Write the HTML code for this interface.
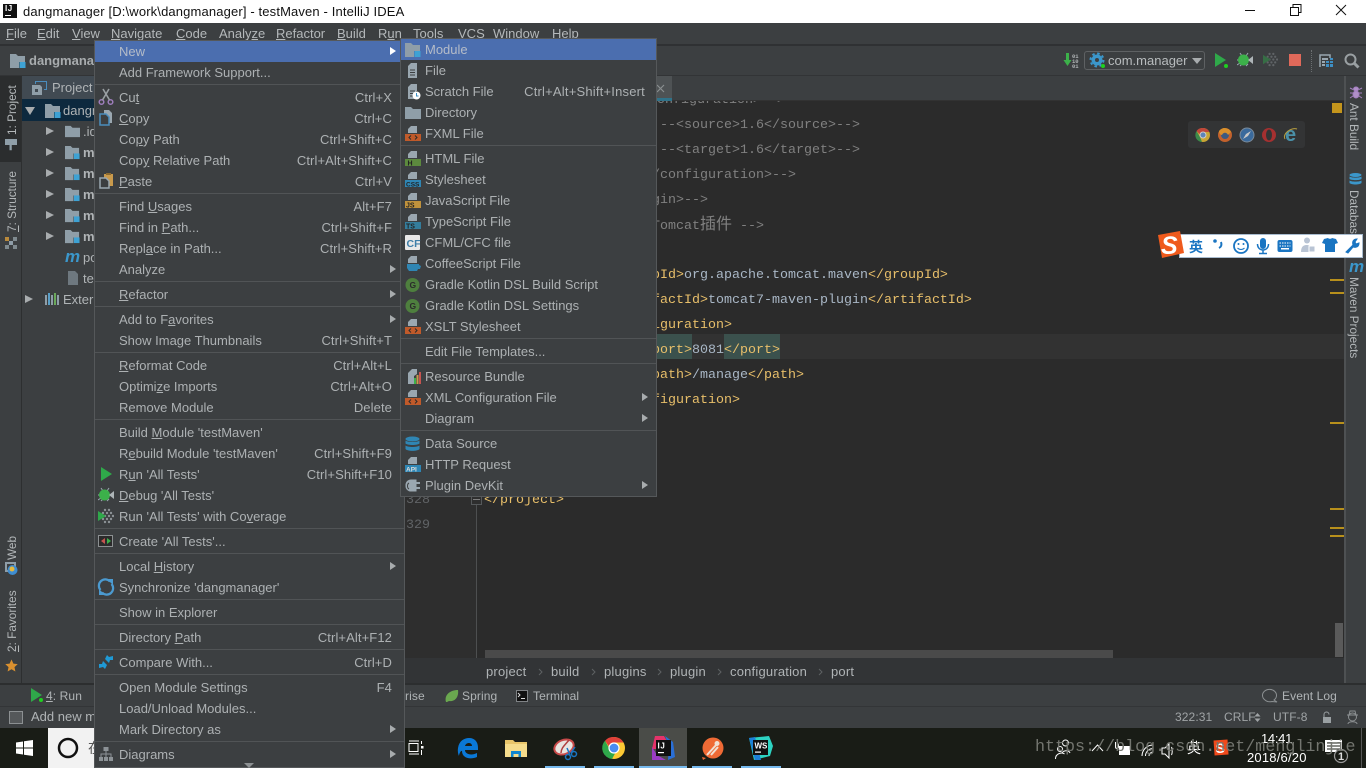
<!DOCTYPE html>
<html><head><meta charset="utf-8"><title>dangmanager</title>
<style>
html,body{margin:0;padding:0;width:1366px;height:768px;overflow:hidden;background:#3c3f41}
body{position:relative;font-family:"Liberation Sans","Noto Sans CJK SC",sans-serif;font-size:13px;color:#b0b4b6;letter-spacing:0}
.p{position:absolute;white-space:nowrap}
.box{position:absolute}
svg{position:absolute;overflow:visible}
.m{position:absolute;background:#3c3f41;border:1px solid #55585a;box-sizing:border-box;z-index:20}
.r{position:relative;height:21px;line-height:21px;white-space:nowrap;color:#adb1b3}
.r.h{background:#4b6eaf;color:#b5bcc8}
.s{height:4px;position:relative}
.s:before{content:"";position:absolute;left:0;right:0;top:1px;height:1px;background:#515456}
#a .r{padding-left:24px}
#b .r{padding-left:24px}
.k{position:absolute;right:12px;top:0;font-weight:normal;letter-spacing:.1px}
#b .k{right:11px;letter-spacing:.2px}
.a{position:absolute;right:8px;top:6px;width:0;height:0;border-left:6px solid #a8acae;border-top:4.5px solid transparent;border-bottom:4.5px solid transparent}
.h .a{border-left-color:#fff}
.ic{left:3px;top:2px;width:16px;height:16px}
#b .ic{left:4px;top:3px}
.mb{position:absolute;top:23px;line-height:22px;color:#b4b8ba;white-space:nowrap}
.c{position:absolute;margin:0;height:25px;line-height:25px;font-family:"Liberation Mono","Noto Sans CJK SC",monospace;font-size:13.33px;letter-spacing:0;color:#e8bf6a;white-space:pre}
.c i{font-style:normal;color:#a9b7c6}
.c em{font-style:normal;color:#808080}
.v{position:absolute;writing-mode:vertical-rl;white-space:nowrap;color:#b4b8ba;font-size:11.8px;letter-spacing:0;line-height:16px}
.up{transform:rotate(180deg)}
.st{position:absolute;left:1330px;width:14px;height:2px;background:#b8901c}
.tb{position:absolute;top:766px;height:2px;background:#76b9ed}
.bc{letter-spacing:.2px}
.t12{font-size:12px;letter-spacing:.1px}
</style></head>
<body>
<svg width="0" height="0" style="position:absolute">
<defs>
<symbol id="fo" viewBox="0 0 16 16"><path fill="#8f9ea8" d="M0 2h6l2 2h8v10H0z"/></symbol>
<symbol id="mo" viewBox="0 0 16 16"><path fill="#8f9ea8" d="M0 1h6l2 2h7v6H9v6H0z"/><rect x="9.5" y="9" width="6" height="6" fill="#3ea2d4"/></symbol>
<symbol id="he" viewBox="0 0 16 16"><path fill="#9aa7b0" d="M6 0h6v7H3V3z"/></symbol>
<symbol id="bug" viewBox="0 0 16 16"><path stroke="#9aa7b0" stroke-width="1" fill="none" d="M3 1l2 3M11 1L9 4M0 8h3M0 13l3-2M3 14l2-2M9 14l2-2"/><circle cx="6.5" cy="8" r="5.5" fill="#3cb14a"/><path fill="#aeb5b8" d="M16 4v8l-5-4z"/></symbol>
<symbol id="cov" viewBox="0 0 16 16"><g fill="#8c9296"><circle cx="7" cy="2" r="1.2"/><circle cx="11" cy="2" r="1.2"/><circle cx="5" cy="5" r="1.2"/><circle cx="9" cy="5" r="1.2"/><circle cx="13" cy="5" r="1.2"/><circle cx="7" cy="8" r="1.2"/><circle cx="11" cy="8" r="1.2"/><circle cx="15" cy="8" r="1.2"/><circle cx="5" cy="11" r="1.2"/><circle cx="9" cy="11" r="1.2"/><circle cx="13" cy="11" r="1.2"/><circle cx="7" cy="14" r="1.2"/><circle cx="11" cy="14" r="1.2"/></g><path fill="#2fa84a" d="M0 3l8 5-8 5z"/></symbol>
</defs>
</svg>

<!-- title bar -->
<div class="box" style="left:0;top:0;width:1366px;height:23px;background:#fff"></div>
<div class="box" style="left:3px;top:4px;width:14px;height:14px;background:#111"></div>
<div class="p" style="left:5px;top:4px;color:#fff;font-size:8px;font-weight:bold;line-height:10px;letter-spacing:.5px">IJ</div>
<div class="box" style="left:5px;top:15px;width:6px;height:1px;background:#fff"></div>
<div class="p" style="left:23px;top:3px;line-height:18px;color:#111;letter-spacing:.14px">dangmanager [D:\work\dangmanager] - testMaven - IntelliJ IDEA</div>
<svg style="left:1240px;top:0" width="126" height="23" stroke="#111" fill="none"><path d="M5 10.5h10"/><path d="M50.5 7.5h8v8h-8zM53 7V4.500h8v8h-2.500"/><path d="M96 5l10 10M106 5L96 15"/></svg>

<!-- menu bar -->
<div class="box" style="left:0;top:23px;width:1366px;height:22px;background:#3c3f41"></div>
<div class="mb" style="left:6px"><u>F</u>ile</div>
<div class="mb" style="left:37px"><u>E</u>dit</div>
<div class="mb" style="left:72px"><u>V</u>iew</div>
<div class="mb" style="left:111px"><u>N</u>avigate</div>
<div class="mb" style="left:176px"><u>C</u>ode</div>
<div class="mb" style="left:219px">Analy<u>z</u>e</div>
<div class="mb" style="left:276px"><u>R</u>efactor</div>
<div class="mb" style="left:337px"><u>B</u>uild</div>
<div class="mb" style="left:378px">R<u>u</u>n</div>
<div class="mb" style="left:413px"><u>T</u>ools</div>
<div class="mb" style="left:458px">VC<u>S</u></div>
<div class="mb" style="left:493px"><u>W</u>indow</div>
<div class="mb" style="left:552px"><u>H</u>elp</div>

<!-- nav bar -->
<div class="box" style="left:0;top:44px;width:1366px;height:2px;background:#2f3133"></div>
<div class="box" style="left:0;top:75px;width:1366px;height:1px;background:#323436"></div>
<svg style="left:10px;top:53px" width="16" height="16"><use href="#mo"/></svg>
<div class="p" style="left:29px;top:52px;line-height:17px;font-weight:bold;color:#a8acae">dangmanager</div>

<svg style="left:1063px;top:52px" width="16" height="16"><path fill="#3cb14a" d="M3 1h3v7h2.500L4.500 14 .5 8H3z"/><text x="9" y="6" font-size="5.500" font-family="Liberation Mono" fill="#b0b4b6" letter-spacing="0" font-weight="bold">01</text><text x="9" y="11" font-size="5.500" font-family="Liberation Mono" fill="#b0b4b6" letter-spacing="0" font-weight="bold">10</text><text x="9" y="16" font-size="5.500" font-family="Liberation Mono" fill="#b0b4b6" letter-spacing="0" font-weight="bold">01</text></svg>
<div class="box" style="left:1084px;top:51px;width:121px;height:19px;border:1px solid #5e6163;border-radius:3px;box-sizing:border-box"></div>
<svg style="left:1090px;top:53px" width="16" height="16" viewBox="0 0 16 16"><circle cx="7" cy="7" r="5.500" fill="#3b97cb"/><circle cx="7" cy="7" r="6.500" fill="none" stroke="#3b97cb" stroke-width="2" stroke-dasharray="2.500 2.600"/><circle cx="7" cy="7" r="2" fill="#3c3f41"/><circle cx="13" cy="13" r="2" fill="#1fd01f"/></svg>
<div class="p" style="left:1108px;top:52px;line-height:17px;color:#b8bcbe">com.manager</div>
<div class="box" style="left:1192px;top:58px;border-top:6px solid #a8acae;border-left:5px solid transparent;border-right:5px solid transparent"></div>
<svg style="left:1215px;top:53px" width="16" height="16"><path fill="#2fa84a" d="M0 0l11 7-11 7z"/><circle cx="11" cy="13" r="2" fill="#1fd01f"/></svg>
<svg style="left:1237px;top:52px" width="16" height="16"><use href="#bug"/></svg>
<svg style="left:1263px;top:52px;opacity:.45" width="15" height="15"><use href="#cov"/></svg>
<div class="box" style="left:1289px;top:54px;width:12px;height:12px;background:#e0695a"></div>
<div class="box" style="left:1311px;top:50px;height:22px;width:0;border-left:1px dotted #6c7072"></div>
<svg style="left:1319px;top:53px" width="16" height="16"><path fill="none" stroke="#9aa7b0" stroke-width="1.500" d="M1 14V2h10v3"/><g fill="#9aa7b0"><rect x="3" y="5" width="6" height="2"/><rect x="3" y="8" width="3" height="2"/><rect x="3" y="11" width="3" height="2"/></g><g fill="#3e8fc4"><rect x="7" y="8" width="3" height="2"/><rect x="11" y="8" width="3" height="2"/><rect x="7" y="11" width="3" height="3"/><rect x="11" y="11" width="3" height="3"/><rect x="11" y="5" width="3" height="2"/></g></svg>
<svg style="left:1344px;top:53px" width="16" height="16" fill="none" stroke="#9aa0a3" stroke-width="2"><circle cx="6.500" cy="6.500" r="5"/><path stroke-width="3" d="M10 10l4.500 4.500"/></svg>

<!-- left stripe -->
<div class="box" style="left:0;top:76px;width:21px;height:607px;background:#3c3f41"></div>
<div class="box" style="left:0;top:76px;width:21px;height:86px;background:#2b2d2e"></div>
<div class="box" style="left:21px;top:76px;width:1px;height:607px;background:#2d2f30"></div>
<div class="v up" style="left:4px;top:85px;height:50px">1: Project</div>
<svg style="left:5px;top:139px" width="12" height="12" viewBox="0 0 16 16"><path fill="#8f9ea8" d="M0 0h16v8H9v7H6V8H0z"/></svg>
<div class="v up" style="left:4px;top:171px;height:61px"><u>7</u>: Structure</div>
<svg style="left:5px;top:237px" width="12" height="12"><rect x="0" y="0" width="4" height="4" fill="#b98a3c"/><rect x="8" y="0" width="4" height="4" fill="#7f8a8f"/><rect x="0" y="8" width="4" height="4" fill="#7f8a8f"/><rect x="8" y="8" width="4" height="4" fill="#7f8a8f"/><rect x="4" y="4" width="4" height="4" fill="#8f9ea8"/></svg>
<div class="v up" style="left:4px;top:534px;height:26px">Web</div>
<svg style="left:5px;top:562px" width="14" height="14"><rect x="0" y="0" width="11" height="10" fill="#8f9ea8"/><rect x="2" y="2" width="7" height="6" fill="#3c3f41"/><circle cx="7.500" cy="8" r="5" fill="#3f8dd0"/><circle cx="7" cy="7" r="2.500" fill="#e5b83c"/></svg>
<div class="v up" style="left:4px;top:596px;height:56px"><u>2</u>: Favorites</div>
<svg style="left:5px;top:659px" width="13" height="13" viewBox="0 0 24 24"><path fill="#d9902f" d="M12 1l3.500 7.500 8 1-6 5.500 1.700 8L12 19l-7.200 4 1.700-8-6-5.500 8-1z"/></svg>

<!-- project panel -->
<div class="box" style="left:22px;top:76px;width:73px;height:607px;background:#3c3f41"></div>
<div class="box" style="left:22px;top:76px;width:73px;height:23px;background:#414a52"></div>
<svg style="left:32px;top:81px" width="16" height="14" fill="none" stroke="#8f9ea8"><path stroke="#4b8dbd" d="M3.500 3V.5h11v8H12"/><path fill="#8f9ea8" stroke="none" d="M0 4h8l2 2v8H0z"/><rect x="3" y="8" width="3" height="3" fill="#414a52" stroke="none"/></svg>
<div class="p" style="left:52px;top:79px;line-height:17px">Project</div>
<div class="box" style="left:22px;top:99px;width:73px;height:22px;background:#0d293e"></div>
<div class="box" style="left:25px;top:107px;border-top:8px solid #a8acae;border-left:5px solid transparent;border-right:5px solid transparent"></div>
<svg style="left:45px;top:103px" width="16" height="16"><use href="#mo"/></svg>
<div class="p" style="left:63px;top:102px;line-height:17px">dangmanager</div>
<div class="box" style="left:46px;top:127px;border-left:8px solid #a8acae;border-top:4.500px solid transparent;border-bottom:4.500px solid transparent"></div>
<svg style="left:65px;top:124px" width="15" height="15"><use href="#fo"/></svg>
<div class="p" style="left:83px;top:123px;line-height:17px">.idea</div>
<div class="box" style="left:46px;top:148px;border-left:8px solid #a8acae;border-top:4.500px solid transparent;border-bottom:4.500px solid transparent"></div>
<svg style="left:65px;top:145px" width="15" height="15"><use href="#mo"/></svg>
<div class="p" style="left:83px;top:144px;line-height:17px;font-weight:bold">manager</div>
<div class="box" style="left:46px;top:169px;border-left:8px solid #a8acae;border-top:4.500px solid transparent;border-bottom:4.500px solid transparent"></div>
<svg style="left:65px;top:166px" width="15" height="15"><use href="#mo"/></svg>
<div class="p" style="left:83px;top:165px;line-height:17px;font-weight:bold">manager</div>
<div class="box" style="left:46px;top:190px;border-left:8px solid #a8acae;border-top:4.500px solid transparent;border-bottom:4.500px solid transparent"></div>
<svg style="left:65px;top:187px" width="15" height="15"><use href="#mo"/></svg>
<div class="p" style="left:83px;top:186px;line-height:17px;font-weight:bold">manager</div>
<div class="box" style="left:46px;top:211px;border-left:8px solid #a8acae;border-top:4.500px solid transparent;border-bottom:4.500px solid transparent"></div>
<svg style="left:65px;top:208px" width="15" height="15"><use href="#mo"/></svg>
<div class="p" style="left:83px;top:207px;line-height:17px;font-weight:bold">manager</div>
<div class="box" style="left:46px;top:232px;border-left:8px solid #a8acae;border-top:4.500px solid transparent;border-bottom:4.500px solid transparent"></div>
<svg style="left:65px;top:229px" width="15" height="15"><use href="#mo"/></svg>
<div class="p" style="left:83px;top:228px;line-height:17px;font-weight:bold">manager</div>
<div class="p" style="left:65px;top:248px;line-height:18px;font-size:17px;font-style:italic;font-weight:bold;color:#3b97cb;letter-spacing:0">m</div>
<div class="p" style="left:83px;top:249px;line-height:17px">pom.xml</div>
<svg style="left:65px;top:271px" width="15" height="15"><path fill="#8f9ea8" d="M3 0h7l3 3v11H3z" opacity=".6"/></svg>
<div class="p" style="left:83px;top:270px;line-height:17px">testMaven</div>
<div class="box" style="left:25px;top:295px;border-left:8px solid #a8acae;border-top:4.500px solid transparent;border-bottom:4.500px solid transparent"></div>
<svg style="left:45px;top:293px" width="15" height="13" fill="#8f9ea8"><rect x="0" y="2" width="2" height="10"/><rect x="3" y="0" width="2" height="12" fill="#5aa0c8"/><rect x="6" y="2" width="2" height="10"/><rect x="9" y="0" width="2" height="12" fill="#6aa85a"/><rect x="12" y="2" width="2" height="10"/></svg>
<div class="p" style="left:63px;top:291px;line-height:17px">External Libraries</div>

<!-- editor -->
<div class="box" style="left:95px;top:76px;width:1249px;height:608px;background:#2b2b2b"></div>
<div class="box" style="left:405px;top:100px;width:72px;height:558px;background:#2e2e2e"></div>
<div class="box" style="left:476px;top:100px;width:1px;height:558px;background:#4d4f50"></div>
<div class="box" style="left:477px;top:334px;width:867px;height:25px;background:#323232"></div>

<pre class="c" style="left:657px;top:87.500px"><em>onfiguration&gt;--&gt;</em></pre>
<pre class="c" style="left:660px;top:112.500px"><em>--&lt;source&gt;1.6&lt;/source&gt;--&gt;</em></pre>
<pre class="c" style="left:660px;top:137.500px"><em>--&lt;target&gt;1.6&lt;/target&gt;--&gt;</em></pre>
<pre class="c" style="left:652px;top:162.500px"><em>/configuration&gt;--&gt;</em></pre>
<pre class="c" style="left:652px;top:187.500px"><em>gin&gt;--&gt;</em></pre>
<pre class="c" style="left:652px;top:212.500px"><em>Tomcat<span style="font-size:16px">插件</span> --&gt;</em></pre>
<pre class="c" style="left:612px;top:262.500px">&lt;groupId&gt;<i>org.apache.tomcat.maven</i>&lt;/groupId&gt;</pre>
<pre class="c" style="left:612px;top:287.500px">&lt;artifactId&gt;<i>tomcat7-maven-plugin</i>&lt;/artifactId&gt;</pre>
<pre class="c" style="left:612px;top:312.500px">&lt;configuration&gt;</pre>
<div class="box" style="left:644px;top:334px;width:48px;height:25px;background:#3b514d"></div>
<div class="box" style="left:724px;top:334px;width:56px;height:25px;background:#3b514d"></div>
<pre class="c" style="left:644px;top:337.500px">&lt;port&gt;<i>8081</i>&lt;/port&gt;</pre>
<pre class="c" style="left:644px;top:362.500px">&lt;path&gt;<i>/manage</i>&lt;/path&gt;</pre>
<pre class="c" style="left:612px;top:387.500px">&lt;/configuration&gt;</pre>
<pre class="c" style="left:484px;top:487.500px">&lt;/project&gt;</pre>
<pre class="c" style="left:406px;top:487.500px;color:#606366">328</pre>
<pre class="c" style="left:406px;top:512.500px;color:#606366">329</pre>
<div class="box" style="left:471px;top:495px;width:11px;height:10px;background:#2e2e2e;border:1px solid #55585a;box-sizing:border-box"></div>
<div class="box" style="left:473px;top:499px;width:7px;height:1px;background:#808080"></div>

<div class="box" style="left:1332px;top:103px;width:10px;height:10px;background:#c4951c"></div>
<div class="st" style="top:279px"></div><div class="st" style="top:292px"></div><div class="st" style="top:422px"></div><div class="st" style="top:508px"></div><div class="st" style="top:527px"></div><div class="st" style="top:535px"></div>
<div class="box" style="left:1335px;top:623px;width:8px;height:34px;background:#5a5a5a"></div>
<div class="box" style="left:485px;top:650px;width:628px;height:8px;background:#4a4a4a"></div>

<!-- browser icons -->
<div class="box" style="left:1188px;top:121px;width:117px;height:27px;background:#333435;border-radius:3px"></div>
<svg style="left:1188px;top:121px" width="117" height="27">
<circle cx="15" cy="14" r="7" fill="#c9a534"/><path d="M15 7a7 7 0 0 1 6.300 4H15l-3.500 2-3-3A7 7 0 0 1 15 7z" fill="#c0473a"/><path d="M8.500 10l3.500 6 2 5a7 7 0 0 1-6-10z" fill="#3c8a4a"/><circle cx="15" cy="14" r="3" fill="#5c84b8" stroke="#ccc"/>
<circle cx="37" cy="14" r="7" fill="#c2612c"/><circle cx="37" cy="14" r="4" fill="#3c5a80"/><path d="M31 10a7 7 0 0 1 12 1l-3 3c-1-3-5-3-6 0-2 0-3-2-3-4z" fill="#d8902c"/>
<circle cx="59" cy="14" r="7" fill="#3a6a9c" stroke="#7a8a9a"/><path d="M63 10l-3 5-2-2zM55 18l3-5 2 2z" fill="#c8c8c8"/>
<circle cx="81" cy="14" r="7" fill="#a53030"/><ellipse cx="81" cy="14" rx="3" ry="5.500" fill="#333435"/>
<text x="97" y="20" font-size="20" font-weight="bold" font-family="Liberation Sans" fill="#4a90a8" letter-spacing="0">e</text><path d="M97 18c-3-5 6-12 12-10" stroke="#b8a040" fill="none"/>
</svg>

<!-- editor tabs -->
<div class="box" style="left:657px;top:76px;width:687px;height:24px;background:#3c3f41"></div>
<div class="box" style="left:657px;top:100px;width:687px;height:1px;background:#323232"></div>
<div class="box" style="left:640px;top:76px;width:32px;height:22px;background:#4e5254"></div>
<div class="box" style="left:640px;top:98px;width:32px;height:3px;background:#30738a"></div>
<svg style="left:656px;top:84px" width="10" height="10" stroke="#8a8e90" fill="none" stroke-width="1.200"><path d="M1 1l7 7M8 1L1 8"/></svg>

<!-- right stripe -->
<div class="box" style="left:1344px;top:76px;width:22px;height:607px;background:#3c3f41"></div>
<div class="box" style="left:1344px;top:76px;width:2px;height:607px;background:#4e5153"></div>
<svg style="left:1350px;top:86px" width="12" height="13" stroke="#a47fc0" fill="none"><ellipse cx="6" cy="3" rx="2.500" ry="2" fill="#b08fc8"/><ellipse cx="6" cy="8.500" rx="3" ry="3.500" fill="#b08fc8"/><path d="M0 2l3 1.500M12 2L9 3.500M0 7h3M12 7H9M0 12l3-2M12 12l-3-2"/></svg>
<div class="v" style="left:1346px;top:103px;height:50px">Ant Build</div>
<svg style="left:1349px;top:173px" width="13" height="13"><g fill="#3b97cb"><ellipse cx="6.500" cy="2" rx="6" ry="2"/><path d="M.5 3.500c2 1.500 10 1.500 12 0v2.500c-2 1.500-10 1.500-12 0zM.5 7.500c2 1.500 10 1.500 12 0v2.500c-2 2-10 2-12 0z"/></g></svg>
<div class="v" style="left:1346px;top:190px;height:45px;overflow:hidden">Database</div>
<div class="p" style="left:1349px;top:258px;line-height:18px;font-size:17px;font-style:italic;font-weight:bold;color:#3b97cb;letter-spacing:0">m</div>
<div class="v" style="left:1346px;top:277px;height:82px">Maven Projects</div>

<!-- sogou -->
<div class="box" style="left:1179px;top:234px;width:184px;height:24px;background:#fff;border:1px solid #a9bccf;box-sizing:border-box;z-index:5"></div>
<svg style="left:1156px;top:231px;z-index:6" width="207" height="28">
<path d="M2 4L24 0l4 22-22 5z" fill="#ef5a1c"/>
<text x="5" y="23" font-size="25" font-weight="bold" font-style="italic" font-family="Liberation Sans" fill="#fff" letter-spacing="0">S</text>
<text x="33" y="21" font-size="14" font-family="Noto Sans CJK SC" font-weight="bold" fill="#1a75c2" letter-spacing="0">英</text>
<circle cx="59" cy="10" r="1.800" fill="#1a75c2"/><path d="M65 11c1 3 0 5-2 6" stroke="#1a75c2" stroke-width="2" fill="none"/>
<circle cx="85" cy="15" r="7" fill="none" stroke="#1a75c2" stroke-width="1.800"/><circle cx="82.500" cy="13" r="1" fill="#1a75c2"/><circle cx="87.500" cy="13" r="1" fill="#1a75c2"/><path d="M81.500 17c2 2 5 2 7 0" stroke="#1a75c2" fill="none"/>
<rect x="104" y="7" width="6" height="11" rx="3" fill="#1a75c2"/><path d="M101.500 13c0 8 11 8 11 0M107 19v3M103 22.500h8" stroke="#1a75c2" stroke-width="1.500" fill="none"/>
<rect x="121.500" y="9" width="15" height="12" rx="2" fill="#1a75c2"/><path d="M123.500 12h11M123.500 15h11" stroke="#fff" stroke-dasharray="1.500 1"/><rect x="125" y="17" width="8" height="1.500" fill="#fff"/>
<circle cx="151" cy="9.500" r="3" fill="#b9c4d4"/><path d="M145 21c0-6 3-7 6-7 4 0 5 2 5 7z" fill="#b9c4d4"/><rect x="153" y="15" width="6" height="6" fill="#b9c4d4" stroke="#fff"/>
<path d="M168 8l4-1c1 1 3 1 4 0l4 1 2 4-3 1v8h-10v-8l-3-1z" fill="#1a75c2"/>
<path d="M190 21l7-7c-1-3 0-6 4-6l-2 3 1 2 3-1c0 4-3 5-6 4l-5 6z" fill="#1a75c2" stroke="#1a75c2"/>
</svg>

<!-- breadcrumb -->
<div class="box" style="left:405px;top:658px;width:939px;height:26px;background:#323436"></div>
<div class="box" style="left:95px;top:683px;width:1271px;height:2px;background:#2c2e2f"></div>
<div class="p bc" style="left:486px;top:663px;line-height:18px">project</div>
<div class="p bc" style="left:551px;top:663px;line-height:18px">build</div>
<div class="p bc" style="left:604px;top:663px;line-height:18px">plugins</div>
<div class="p bc" style="left:670px;top:663px;line-height:18px">plugin</div>
<div class="p bc" style="left:730px;top:663px;line-height:18px">configuration</div>
<div class="p bc" style="left:831px;top:663px;line-height:18px">port</div>
<svg style="left:400px;top:663px" width="460" height="18" fill="none" stroke="#5e6163"><path d="M139 6l3 3-3 3M192 6l3 3-3 3M258 6l3 3-3 3M318 6l3 3-3 3M419 6l3 3-3 3"/></svg>

<!-- tool bar -->
<div class="box" style="left:0;top:683px;width:1366px;height:2px;background:#2c2e2f"></div>
<div class="box" style="left:0;top:685px;width:1366px;height:22px;background:#3c3f41"></div>
<svg style="left:31px;top:688px" width="14" height="16"><path fill="#2fa84a" d="M0 0l11 7-11 7z"/><circle cx="10" cy="12" r="2" fill="#1fd01f"/></svg>
<div class="p t12" style="left:46px;top:687px;line-height:18px"><u>4</u>: Run</div>
<div class="p t12" style="left:405px;top:687px;line-height:18px">rise</div>
<svg style="left:445px;top:689px" width="14" height="14"><path fill="#6aa84f" d="M1 13C-1 6 5 1 13 1c1 7-3 12-9 11l-2 1z"/></svg>
<div class="p t12" style="left:462px;top:687px;line-height:18px">Spring</div>
<div class="box" style="left:516px;top:690px;width:12px;height:12px;background:#111;border:1px solid #7f8285;box-sizing:border-box"></div>
<svg style="left:517px;top:691px" width="10" height="10" fill="none" stroke="#ddd"><path d="M1 2l2 2-2 2M4 7.500h4"/></svg>
<div class="p t12" style="left:533px;top:687px;line-height:18px">Terminal</div>
<svg style="left:1262px;top:688px" width="16" height="16" fill="none" stroke="#8c9092"><path d="M3 12a7 6 0 1 1 9 0l3 2-5-.500a7 6 0 0 1-7-1.500z"/></svg>
<div class="p t12" style="left:1282px;top:687px;line-height:18px">Event Log</div>

<!-- status bar -->
<div class="box" style="left:0;top:706px;width:1366px;height:1px;background:#333537"></div>
<div class="box" style="left:0;top:707px;width:1366px;height:21px;background:#3c3f41"></div>
<div class="box" style="left:9px;top:711px;width:14px;height:13px;background:#55585a;border:1px solid #8c9092;box-sizing:border-box"></div>
<div class="p" style="left:31px;top:708px;line-height:18px">Add new modules</div>
<div class="p t12" style="left:1175px;top:708px;line-height:18px;color:#a0a4a6">322:31</div>
<div class="p t12" style="left:1224px;top:708px;line-height:18px;color:#a0a4a6">CRLF</div>
<svg style="left:1254px;top:713px" width="7" height="9" fill="#a0a4a6"><path d="M3.500 0l3 3.500h-6zM3.500 9l3-3.500h-6z"/></svg>
<div class="p t12" style="left:1273px;top:708px;line-height:18px;color:#a0a4a6">UTF-8</div>
<svg style="left:1322px;top:712px" width="10" height="11"><path fill="none" stroke="#9aa0a3" d="M2 5V2.500a2.500 2.500 0 0 1 5 0"/><rect x="1" y="5" width="8" height="6" fill="#9aa0a3"/></svg>
<svg style="left:1346px;top:710px" width="13" height="15" fill="none" stroke="#8c9092"><circle cx="6.500" cy="7" r="4"/><path d="M1 5h11M3 5l1-4h5l1 4M2 14c0-3 9-3 9 0"/></svg>

<!-- taskbar -->
<div class="box" style="left:0;top:728px;width:1366px;height:40px;background:#191c16"></div>
<svg style="left:16px;top:740px" width="17" height="16" fill="#fff"><path d="M0 2.500l7-1v6H0zM8 1.300l9-1.300v7.500H8zM0 8.500h7v6l-7-1zM8 8.500h9V16l-9-1.300z"/></svg>
<div class="box" style="left:48px;top:728px;width:47px;height:40px;background:#f2f2f2"></div>
<svg style="left:57px;top:737px" width="22" height="22" fill="none"><circle cx="11" cy="11" r="9" stroke="#111" stroke-width="2.500"/></svg>
<div class="p" style="left:88px;top:739px;line-height:18px;color:#555;font-size:14px">在</div>
<svg style="left:408px;top:740px" width="16" height="16" fill="none" stroke="#fff"><path d="M1 1h10M1 3.500h9v8H1zM1 14h10M13.500 1v3M13.500 10v5"/><rect x="13" y="6" width="2.500" height="2.500" fill="#fff" stroke="none"/></svg>
<svg style="left:457px;top:737px" width="22" height="22" viewBox="0 0 22 22"><path fill="#0a78d7" d="M1 11C2 4 7 1 12 1c6 0 9 4 9 10v2H8c0 4 6 6 12 3v4c-7 3-15 1-15-6-1-1-3 3-3 5-1-2-1.500-5-1-8zM8 9h7c0-4-6-4-7 0z"/></svg>
<svg style="left:505px;top:738px" width="22" height="21"><path fill="#e8c56a" d="M0 2h8l2 2h12v15H0z"/><path fill="#f5dc8c" d="M0 6h22v13H0z"/><path fill="#0f86d0" d="M6 19v-6h10v6h-2.500v-3h-5v3z"/></svg>
<svg style="left:553px;top:737px" width="26" height="24"><ellipse cx="11" cy="10" rx="10" ry="7" fill="#e8e4e0" stroke="#c84a4a" stroke-width="2" transform="rotate(-22 11 10)"/><path d="M8 16c0-5 4-8 8-13" stroke="#b04040" stroke-width="1.500" fill="none"/><circle cx="15" cy="20" r="2.500" fill="none" stroke="#1a75c2" stroke-width="1.500"/><circle cx="21" cy="17" r="2.500" fill="none" stroke="#1a75c2" stroke-width="1.500"/><path d="M14 11l3 7M22 10l-4 6" stroke="#1a75c2" stroke-width="1.500"/></svg>
<svg style="left:603px;top:737px" width="22" height="22" viewBox="0 0 22 22"><circle cx="11" cy="11" r="11" fill="#fcc934"/><path d="M11 0a11 11 0 0 1 9.500 5.500H11a5.500 5.500 0 0 0-5.200 3.700L2 3.700A11 11 0 0 1 11 0z" fill="#e0413a"/><path d="M2 3.700l4.500 8A5.500 5.500 0 0 0 12 16.500L9 22A11 11 0 0 1 2 3.700z" fill="#2fa84a"/><circle cx="11" cy="11" r="5" fill="#4a8cf0" stroke="#fff" stroke-width="1.200"/></svg>
<div class="box" style="left:639px;top:728px;width:48px;height:40px;background:#4a4c48"></div>
<svg style="left:651px;top:736px" width="24" height="24" viewBox="0 0 24 24"><path fill="#e5336a" d="M4 0h9l3 5-8 8H1z"/><path fill="#2a6fd6" d="M14 0l8 6 2 15-7 3 1-14z"/><path fill="#9a3cc4" d="M1 11l5 8 9 5H1z"/><rect x="5" y="4" width="15" height="16" fill="#111"/><text x="6.500" y="12.500" font-size="8" font-weight="bold" font-family="Liberation Sans" fill="#fff" letter-spacing=".6">IJ</text><rect x="7" y="16" width="6" height="1.200" fill="#fff"/></svg>
<svg style="left:701px;top:737px" width="24" height="24"><circle cx="12" cy="11" r="10.500" fill="#ef6a35"/><path d="M6 18L16 7M10 18l7-8" stroke="#f0e0d4" stroke-width="2"/><circle cx="16" cy="6.500" r="2.500" fill="#f0e0d4"/><path d="M1 20l4 1-3 2z" fill="#ef6a35"/></svg>
<svg style="left:749px;top:736px" width="24" height="24"><path fill="#2dd3c2" d="M0 2l20-2 4 10-3 10-16 4z"/><path fill="#1c7fd8" d="M0 2l6 22h6L6 1z"/><rect x="4" y="4" width="15" height="15" fill="#111"/><text x="5.500" y="12.500" font-size="8" font-weight="bold" font-family="Liberation Sans" fill="#fff" letter-spacing="0">WS</text><rect x="6" y="15.500" width="6" height="1.200" fill="#fff"/></svg>
<div class="tb" style="left:545px;width:40px"></div><div class="tb" style="left:594px;width:40px"></div><div class="tb" style="left:639px;width:48px"></div><div class="tb" style="left:692px;width:40px"></div><div class="tb" style="left:741px;width:40px"></div>

<!-- tray -->
<svg style="left:1050px;top:736px" width="130" height="32" fill="none" stroke="#fff">
<circle cx="15.500" cy="7" r="3"/><circle cx="10" cy="13" r="2.500"/><path d="M5.500 23c0-6 7-7 9-5M12 17c2-3 7-3 8 0"/>
<path d="M42 15l5.500-6 5.500 6"/>
<rect x="69" y="10" width="11" height="9" fill="#fff" stroke="none"/><path d="M65.500 6v5c0 2 3 2 3 0V8"/>
<path d="M92 20a11 11 0 0 1 11-11M95.500 20a7.500 7.500 0 0 1 7.500-7.500M99 20a4 4 0 0 1 4-4"/>
<path d="M112 12h3l4-4v14l-4-4h-3zM121.500 11c1 2 1 6 0 8"/>
</svg>
<div class="p" style="left:1187px;top:739px;line-height:18px;color:#fff;font-size:14px;letter-spacing:0">英</div>
<svg style="left:1214px;top:740px" width="16" height="16"><rect width="14" height="15" fill="#ef4a1c" transform="rotate(-4 7 7)"/><text x="1.500" y="13" font-size="14" font-weight="bold" font-family="Liberation Sans" fill="#fff" letter-spacing="0">S</text></svg>
<div class="p" style="left:1261px;top:730px;line-height:17px;color:#fff;font-size:13px;letter-spacing:-.3px">14:41</div>
<div class="p" style="left:1247px;top:749px;line-height:17px;color:#fff;font-size:13px;letter-spacing:.2px">2018/6/20</div>
<svg style="left:1325px;top:740px" width="30" height="26"><rect width="17" height="12" fill="#fff"/><path d="M2 3h13M2 6h13M2 9h13" stroke="#191c16"/><circle cx="16" cy="16" r="6.500" fill="#191c16" stroke="#999" stroke-width="1.200"/><text x="13" y="20" font-size="11" font-weight="bold" font-family="Liberation Sans" fill="#ddd" letter-spacing="0">1</text></svg>
<div class="box" style="left:1361px;top:728px;width:1px;height:40px;background:#555"></div>
<div class="p" style="left:1035px;top:737px;line-height:22px;font-family:'Liberation Mono',monospace;font-size:16.700px;letter-spacing:0;color:#73756f;z-index:6">https://blog.csdn.net/menglinjie</div>

<!-- main popup -->
<div class="m" id="a" style="left:94px;top:40px;width:311px;height:728px">
<div class="r h">New<i class="a"></i></div>
<div class="r">Add Framework Support...</div>
<div class="s"></div>
<div class="r"><svg class="ic" viewBox="0 0 16 16" fill="none" stroke="#9d7dbb" stroke-width="1.500"><circle cx="3.500" cy="13" r="2.300"/><circle cx="12.500" cy="13" r="2.300"/><path stroke="#9aa0a3" stroke-width="1.600" d="M4.500 11L11 0M11.500 11L5 0"/></svg>Cu<u>t</u><span class="k">Ctrl+X</span></div>
<div class="r"><svg class="ic" viewBox="0 0 16 16"><path fill="#9aa7b0" d="M6 0h5l3 3v10H6z"/><path fill="#3c3f41" stroke="#4b8dbd" stroke-width="1.500" d="M2 4h6l3 3v8H2z"/></svg><u>C</u>opy<span class="k">Ctrl+C</span></div>
<div class="r">Co<u>p</u>y Path<span class="k">Ctrl+Shift+C</span></div>
<div class="r">Cop<u>y</u> Relative Path<span class="k">Ctrl+Alt+Shift+C</span></div>
<div class="r"><svg class="ic" viewBox="0 0 16 16"><path fill="#c99a4c" d="M6 1h9v12H6z"/><rect x="8" y="0" width="5" height="2" fill="#8c6a30"/><path fill="#3c3f41" stroke="#9aa7b0" stroke-width="1.500" d="M2 5h6l3 3v7H2z"/></svg><u>P</u>aste<span class="k">Ctrl+V</span></div>
<div class="s"></div>
<div class="r">Find <u>U</u>sages<span class="k">Alt+F7</span></div>
<div class="r">Find in <u>P</u>ath...<span class="k">Ctrl+Shift+F</span></div>
<div class="r">Repl<u>a</u>ce in Path...<span class="k">Ctrl+Shift+R</span></div>
<div class="r">Analyze<i class="a"></i></div>
<div class="s"></div>
<div class="r"><u>R</u>efactor<i class="a"></i></div>
<div class="s"></div>
<div class="r">Add to F<u>a</u>vorites<i class="a"></i></div>
<div class="r">Show Image Thumbnails<span class="k">Ctrl+Shift+T</span></div>
<div class="s"></div>
<div class="r"><u>R</u>eformat Code<span class="k">Ctrl+Alt+L</span></div>
<div class="r">Optimi<u>z</u>e Imports<span class="k">Ctrl+Alt+O</span></div>
<div class="r">Remove Module<span class="k">Delete</span></div>
<div class="s"></div>
<div class="r">Build <u>M</u>odule 'testMaven'</div>
<div class="r">R<u>e</u>build Module 'testMaven'<span class="k">Ctrl+Shift+F9</span></div>
<div class="r"><svg class="ic" viewBox="0 0 16 16"><path fill="#2fa84a" d="M3 1l11 7-11 7z"/></svg>R<u>u</u>n 'All Tests'<span class="k">Ctrl+Shift+F10</span></div>
<div class="r"><svg class="ic" viewBox="0 0 16 16"><use href="#bug"/></svg><u>D</u>ebug 'All Tests'</div>
<div class="r"><svg class="ic" viewBox="0 0 16 16"><use href="#cov"/></svg>Run 'All Tests' with Co<u>v</u>erage</div>
<div class="s"></div>
<div class="r"><svg class="ic" viewBox="0 0 16 16"><rect x=".5" y="2.500" width="14" height="11" fill="#2b2b2b" stroke="#8c9092"/><path fill="#c75450" d="M7 5v6L3 8z"/><path fill="#3cb14a" d="M9 5v6l4-3z"/></svg>Create 'All Tests'...</div>
<div class="s"></div>
<div class="r">Local <u>H</u>istory<i class="a"></i></div>
<div class="r"><svg class="ic" viewBox="0 0 16 16" fill="none" stroke="#4b9ad0" stroke-width="2.200"><path d="M2.500 11A6 6 0 0 1 12 2.500M13.500 5A6 6 0 0 1 4 13.500"/><path fill="#4b9ad0" stroke="none" d="M9 0h6v6zM7 16H1v-6z"/></svg>Synchronize 'dangmanager'</div>
<div class="s"></div>
<div class="r">Show in Explorer</div>
<div class="s"></div>
<div class="r">Directory <u>P</u>ath<span class="k">Ctrl+Alt+F12</span></div>
<div class="s"></div>
<div class="r"><svg class="ic" viewBox="0 0 16 16" fill="#1f9ad6"><path d="M9 1l2 2 4-1v4h-3l-1 3-4-4zM7 15l-2-2-4 1v-4h3l1-3 4 4z"/></svg>Compare With...<span class="k">Ctrl+D</span></div>
<div class="s"></div>
<div class="r">Open Module Settings<span class="k">F4</span></div>
<div class="r">Load/Unload Modules...</div>
<div class="r">Mark Directory as<i class="a"></i></div>
<div class="s"></div>
<div class="r"><svg class="ic" viewBox="0 0 16 16" fill="#8c9296"><rect x="5.500" y="1" width="5" height="4"/><rect x="1" y="11" width="4" height="4"/><rect x="6" y="11" width="4" height="4"/><rect x="11" y="11" width="4" height="4"/><path fill="none" stroke="#8c9296" d="M8 5v6M3 11V8h10v3"/></svg>Diagrams<i class="a"></i></div>
<div class="box" style="left:149px;top:722px;border-top:5px solid #8c9092;border-left:5px solid transparent;border-right:5px solid transparent"></div>
</div>

<!-- sub popup -->
<div class="m" id="b" style="left:400px;top:38px;width:257px;height:459px;z-index:21">
<div class="r h"><svg class="ic" viewBox="0 0 16 16"><use href="#mo"/></svg>Module</div>
<div class="r"><svg class="ic" viewBox="0 0 16 16"><path fill="#9aa7b0" d="M6 0h6v15H3V3z"/><path stroke="#3c3f41" d="M5 7h5M5 9.500h5M5 12h5"/></svg>File</div>
<div class="r"><svg class="ic" viewBox="0 0 16 16"><path fill="#9aa7b0" d="M6 0h6v7h-1v8H3V3z"/><path stroke="#3c3f41" d="M5 7h5M5 9.500h3M5 12h3"/><circle cx="11.500" cy="11.500" r="4" fill="#fff"/><path d="M11.500 9v3h2" stroke="#3b8fc4" fill="none"/></svg>Scratch File<span class="k">Ctrl+Alt+Shift+Insert</span></div>
<div class="r"><svg class="ic" viewBox="0 0 16 16"><use href="#fo"/></svg>Directory</div>
<div class="r"><svg class="ic" viewBox="0 0 16 16"><use href="#he"/><rect y="8" width="16" height="7" fill="#c05a2a"/><path d="M6 9.500L4 11.500l2 2M10 9.500l2 2-2 2" stroke="#2b2b2b" fill="none"/></svg>FXML File</div>
<div class="s"></div>
<div class="r"><svg class="ic" viewBox="0 0 16 16"><use href="#he"/><rect y="8" width="16" height="7" fill="#5c8a3e"/><text x="2.500" y="14.500" font-size="7" font-weight="bold" fill="#222" letter-spacing="0" font-family="Liberation Sans">H</text></svg>HTML File</div>
<div class="r"><svg class="ic" viewBox="0 0 16 16"><use href="#he"/><rect y="8" width="16" height="7" fill="#2f86b4"/><text x="1" y="14.500" font-size="6.500" font-weight="bold" fill="#222" letter-spacing="0" font-family="Liberation Sans">CSS</text></svg>Stylesheet</div>
<div class="r"><svg class="ic" viewBox="0 0 16 16"><use href="#he"/><rect y="8" width="16" height="7" fill="#c0923c"/><text x="1" y="14.500" font-size="7" font-weight="bold" fill="#222" letter-spacing="0" font-family="Liberation Sans">JS</text></svg>JavaScript File</div>
<div class="r"><svg class="ic" viewBox="0 0 16 16"><use href="#he"/><rect y="8" width="16" height="7" fill="#347d9c"/><text x="1" y="14.500" font-size="7" font-weight="bold" fill="#222" letter-spacing="0" font-family="Liberation Sans">TS</text></svg>TypeScript File</div>
<div class="r"><svg class="ic" viewBox="0 0 16 16"><rect width="15" height="15" rx="1" fill="#e8e8e8"/><text x="1.500" y="12" font-size="10.500" font-weight="bold" fill="#3d7ea8" letter-spacing="0" font-family="Liberation Sans">CF</text></svg>CFML/CFC file</div>
<div class="r"><svg class="ic" viewBox="0 0 16 16"><use href="#he"/><path fill="#2f86b4" d="M2 8h12v1l2 1-1 3-2 0-1 2H4l-2-3z"/></svg>CoffeeScript File</div>
<div class="r"><svg class="ic" viewBox="0 0 16 16"><circle cx="7.500" cy="8" r="7" fill="#4e7f3e"/><text x="4.500" y="11" font-size="8.500" font-weight="bold" fill="#2b2b2b" letter-spacing="0" font-family="Liberation Sans">G</text></svg>Gradle Kotlin DSL Build Script</div>
<div class="r"><svg class="ic" viewBox="0 0 16 16"><circle cx="7.500" cy="8" r="7" fill="#4e7f3e"/><text x="4.500" y="11" font-size="8.500" font-weight="bold" fill="#2b2b2b" letter-spacing="0" font-family="Liberation Sans">G</text></svg>Gradle Kotlin DSL Settings</div>
<div class="r"><svg class="ic" viewBox="0 0 16 16"><use href="#he"/><rect y="8" width="16" height="7" fill="#c05a2a"/><path d="M6 9.500L4 11.500l2 2M10 9.500l2 2-2 2" stroke="#2b2b2b" fill="none"/></svg>XSLT Stylesheet</div>
<div class="s"></div>
<div class="r">Edit File Templates...</div>
<div class="s"></div>
<div class="r"><svg class="ic" viewBox="0 0 16 16"><path fill="#9aa7b0" d="M7 0h5v5l-3 2v8H3V4z"/><rect x="9" y="9" width="2" height="6" fill="#3cb14a"/><rect x="11.500" y="6" width="2" height="9" fill="#c99a4c"/><rect x="14" y="3" width="2" height="12" fill="#c75450"/></svg>Resource Bundle</div>
<div class="r"><svg class="ic" viewBox="0 0 16 16"><use href="#he"/><rect y="8" width="16" height="7" fill="#c05a2a"/><path d="M6 9.500L4 11.500l2 2M10 9.500l2 2-2 2" stroke="#2b2b2b" fill="none"/></svg>XML Configuration File<i class="a"></i></div>
<div class="r">Diagram<i class="a"></i></div>
<div class="s"></div>
<div class="r"><svg class="ic" viewBox="0 0 16 16" fill="#2f86b4"><ellipse cx="7.500" cy="3" rx="7" ry="2.500"/><path d="M.5 4.500c2 2 12 2 14 0v3c-2 2-12 2-14 0zM.5 9.500c2 2 12 2 14 0V13c-2 2.500-12 2.500-14 0z"/></svg>Data Source</div>
<div class="r"><svg class="ic" viewBox="0 0 16 16"><use href="#he"/><rect y="8" width="16" height="7" fill="#2f86b4"/><text x="1" y="14.500" font-size="6.500" font-weight="bold" fill="#ddd" letter-spacing="0" font-family="Liberation Sans">API</text></svg>HTTP Request</div>
<div class="r"><svg class="ic" viewBox="0 0 16 16" fill="none" stroke="#9aa7b0"><path fill="#9aa7b0" d="M6 2h5v11H6a5 5 0 0 1-5-5.500A5 5 0 0 1 6 2z"/><path stroke-width="2" d="M11 5h4M11 10h4"/><path stroke="#3c3f41" d="M4 5c-2 1-2 5 0 6"/></svg>Plugin DevKit<i class="a"></i></div>
</div>
</body></html>
